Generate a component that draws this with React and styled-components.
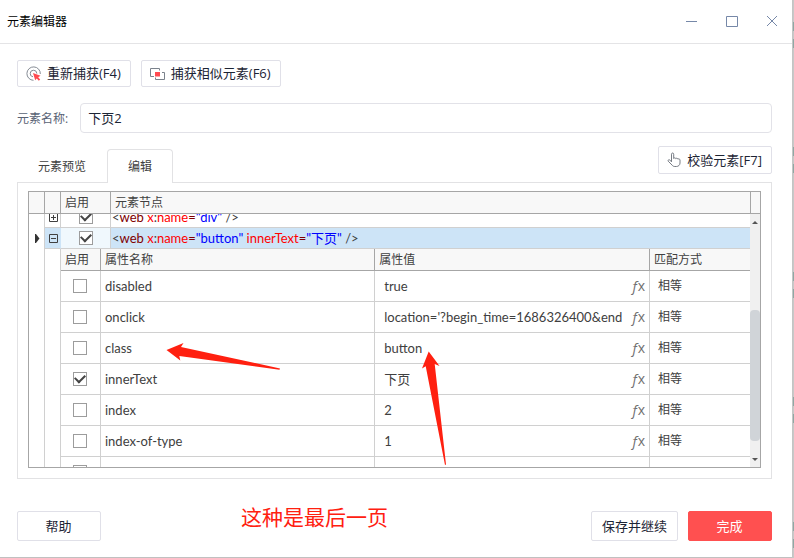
import { useLayoutEffect, useRef } from 'react'
import styled, { createGlobalStyle } from 'styled-components'

const GlobalStyle = createGlobalStyle`
  * {
    box-sizing: border-box;
  }
  body {
    margin: 0;
    background: #fff;
    font-family: "Open Sans", "Noto Sans CJK SC", sans-serif;
    font-size: 12px;
    color: #404040;
  }
  button, input {
    font: inherit;
    color: inherit;
  }
`

const Desktop = styled.div`
  display: flex;
  height: 100vh;
  min-height: 480px;
  background: #c8c8c8;
  position: relative;
`

const DesktopEdge = styled.div`
  width: 2px;
  border-left: 1px solid #c4c4c4;
  background: repeating-linear-gradient(
    #c8c8c8 0 22px,
    #8fa8a4 22px 31px,
    #c8c8c8 31px 39px,
    #8fa8a4 39px 48px,
    #c8c8c8 48px 125px
  );
`

const Window = styled.main`
  flex: 1;
  min-width: 0;
  display: flex;
  flex-direction: column;
  background: #fff;
  border-bottom: 1px solid #c0c0c0;
`

const TitleBar = styled.header`
  height: 44px;
  flex: none;
  display: flex;
  align-items: center;
  justify-content: space-between;
  padding-left: 7px;
  border-bottom: 1px solid #e4e4e6;
`

const Title = styled.h1`
  margin: 0;
  padding-bottom: 2px;
  font-size: 12px;
  font-weight: 400;
  color: #000;
`

const WindowControls = styled.div`
  display: flex;
`

const WindowButton = styled.button`
  width: 40px;
  height: 43px;
  padding: 0 0 2px;
  border: 0;
  background: none;
  color: #7688a8;

  svg {
    display: block;
    margin: 0 auto;
  }
`

const Content = styled.div`
  flex: 1;
  min-height: 0;
  display: flex;
  flex-direction: column;
  padding: 16px 20px 16px 17px;
`

const Toolbar = styled.div`
  display: flex;
  gap: 10px;
  margin-bottom: 16px;
`

const Button = styled.button`
  display: flex;
  align-items: center;
  justify-content: center;
  gap: 5px;
  height: ${({ $height }) => $height || 27}px;
  min-width: ${({ $wide }) => ($wide ? '84px' : '0')};
  padding: 0 ${({ $padding }) => $padding || 9}px 2px ${({ $padding }) => $padding || 8}px;
  border: 1px solid ${({ $primary }) => ($primary ? '#ff5050' : '#e0e0e8')};
  border-radius: 2px;
  background: ${({ $primary }) => ($primary ? '#ff5050' : '#fff')};
  color: ${({ $primary }) => ($primary ? '#fff' : '#1c2434')};
  font-size: 13px;
  white-space: nowrap;

  svg {
    margin-top: 2px;
  }
`

const Field = styled.div`
  display: flex;
  align-items: center;
  gap: 12px;
  margin-bottom: 13px;
  color: #586274;
`

const TextInput = styled.input`
  flex: 1;
  min-width: 0;
  height: 30px;
  padding: 0 7px 2px;
  border: 1px solid #e2e2e8;
  border-radius: 4px;
  outline: none;
  font-size: 13px;
  color: #1c2434;
`

const TabRow = styled.div`
  display: flex;
  justify-content: space-between;
  align-items: flex-start;
  height: 36px;
`

const Tabs = styled.div`
  display: flex;
  padding-top: 3px;
`

const Tab = styled.button`
  height: 34px;
  padding: 0 20px 2px;
  border: 1px solid ${({ $active }) => ($active ? '#e2e2e4' : 'transparent')};
  border-bottom: 0;
  border-radius: 4px 4px 0 0;
  background: ${({ $active }) => ($active ? '#fff' : 'transparent')};
  position: relative;
  z-index: ${({ $active }) => ($active ? 1 : 0)};
`

const Panel = styled.section`
  flex: 1;
  min-height: 0;
  display: flex;
  padding: 8px 10px 10px;
  border: 1px solid #e2e2e4;
`

const TreeGrid = styled.div`
  flex: 1;
  min-width: 0;
  display: flex;
  border: 1px solid #a6a6a6;
`

const Viewport = styled.div`
  flex: 1;
  min-width: 0;
  overflow: hidden;
`

const Table = styled.table`
  width: 100%;
  table-layout: fixed;
  border-collapse: separate;
  border-spacing: 0;
`

const HeadCell = styled.th`
  height: 22px;
  padding: 0 4px;
  border-right: 1px solid #a6a6a6;
  border-bottom: 1px solid #a6a6a6;
  background: #f8f8f8;
  font-weight: 400;
  line-height: 20px;
  text-align: left;

  &:last-child {
    border-right: 0;
  }
`

const StickyHead = styled.thead`
  position: sticky;
  top: 0;
  z-index: 1;
`

const NodeCell = styled.td`
  height: 21px;
  padding: 0 1px;
  border-right: 1px solid #d0d0d0;
  border-bottom: 1px solid #d0d0d0;
  background: ${({ $fill }) => $fill || '#fff'};
  font-family: Lato, "Noto Sans CJK SC", sans-serif;
  font-size: 13px;
  line-height: 20px;
  white-space: nowrap;

  &:last-child {
    border-right: 0;
  }
`

const GutterCell = styled(NodeCell)`
  border-bottom: 0;
`

const ExpandCell = styled(NodeCell)`
  padding: 0 0 0 4px;
  border-right-color: ${({ $fill }) => $fill || '#d0d0d0'};
`

const DetailCell = styled.td`
  padding: 0;
`

const AttrCell = styled.td`
  height: 31px;
  padding: 0 4px;
  border-right: 1px solid #d0d0d0;
  border-bottom: 1px solid #d0d0d0;
  font-family: Lato, "Noto Sans CJK SC", sans-serif;
  font-size: ${({ $small }) => ($small ? 12 : 13)}px;
  line-height: 18px;
  white-space: nowrap;

  &:last-child {
    border-right: 0;
    padding-left: 8px;
  }
`

const CheckCell = styled(AttrCell)`
  padding: 0 5px 0 4px;
`

const ValueBox = styled.div`
  display: flex;
  align-items: center;
  justify-content: space-between;
  padding-left: 5px;
`

const ValueText = styled.span`
  overflow: hidden;
`

const FxButton = styled.button`
  padding: 0;
  border: 0;
  background: none;
  color: #707070;
  font-family: "Open Sans", sans-serif;
  font-size: 14px;
  line-height: 18px;

  i {
    margin-right: -1px;
  }
`

const CheckBox = styled.input`
  appearance: none;
  display: grid;
  place-content: center;
  width: 14px;
  height: 14px;
  margin: 0 auto;
  border: 1px solid #9c9c9c;
  background: #fff;

  &:checked::after {
    content: "";
    width: 8px;
    height: 5px;
    margin-bottom: 3px;
    border: solid #444;
    border-width: 0 0 2px 2px;
    transform: rotate(-45deg);
  }
`

const ToggleButton = styled.button`
  display: block;
  width: 9px;
  height: 9px;
  padding: 0;
  border: 0;
  background: none;

  svg {
    display: block;
  }
`

const RowMarker = styled.svg`
  display: block;
`

const Syntax = styled.span`
  color: ${({ $color }) => $color};
`

const ScrollColumn = styled.div`
  width: 10px;
  display: flex;
  flex-direction: column;
  background: #f0f0f0;
`

const ScrollCap = styled.div`
  height: 22px;
  border-left: 1px solid #a6a6a6;
  border-bottom: 1px solid #a6a6a6;
  background: #f8f8f8;
`

const ScrollArrow = styled.div`
  height: 16px;
  display: grid;
  place-items: center;
`

const ScrollTrack = styled.div`
  flex: 1;
  display: flex;
  flex-direction: column;
  justify-content: flex-end;
  padding-bottom: 10px;
`

const ScrollThumb = styled.div`
  height: 62%;
  border-radius: 4px;
  background: #d0d4d8;
`

const Footer = styled.footer`
  display: flex;
  gap: 10px;
  margin-top: 32px;

  button:first-child {
    margin-right: auto;
  }
`

const Markup = styled.svg`
  position: absolute;
  left: 0;
  top: 0;
  pointer-events: none;
`

const Note = styled.p`
  position: absolute;
  left: 241px;
  top: 502px;
  margin: 0;
  color: #ff2010;
  font-size: 21px;
  line-height: 30px;
`

const attributes = [
  { name: 'disabled', value: 'true', match: '相等' },
  { name: 'onclick', value: "location='?begin_time=1686326400&end", match: '相等' },
  { name: 'class', value: 'button', match: '相等' },
  { name: 'innerText', value: '下页', match: '相等', enabled: true },
  { name: 'index', value: '2', match: '相等' },
  { name: 'index-of-type', value: '1', match: '相等' },
  { name: '', value: '', match: '' },
]

const nodes = [
  { attrs: [['x:name', 'div']] },
  { attrs: [['x:name', 'button'], ['innerText', '下页']], expanded: true },
]

function NodeMarkup({ attrs }) {
  return (
    <>
      &lt;<Syntax $color="#800000">web</Syntax>
      {attrs.map(([key, value]) => {
        const parts = key.split(':')
        return (
          <span key={key}>
            {' '}
            <Syntax $color="#f00">{parts[0]}</Syntax>
            {parts[1] && <>:<Syntax $color="#f00">{parts[1]}</Syntax></>}
            <Syntax $color="#800000">=</Syntax>
            <Syntax $color="#00f">"{value}"</Syntax>
          </span>
        )
      })}
      {' '}/&gt;
    </>
  )
}

function TreeNode({ node }) {
  const open = node.expanded
  const blue = open ? '#cde4f7' : undefined
  return (
    <tr>
      <GutterCell>
        {open && (
          <RowMarker width="14" height="11" viewBox="0 0 14 11">
            <path d="M5 1h1l3.500 4.500-3.500 4.500h-1z" fill="#333" />
          </RowMarker>
        )}
      </GutterCell>
      <ExpandCell $fill={blue}>
        <ToggleButton aria-label={open ? '折叠' : '展开'}>
          <svg width="9" height="9" viewBox="0 0 9 9" fill="none" stroke="#404040">
            <path d={open ? 'M.5 .5h8v8h-8zM2 4.500h5' : 'M.5 .5h8v8h-8zM2 4.500h5M4.500 2v5'} />
          </svg>
        </ToggleButton>
      </ExpandCell>
      <NodeCell $fill={open ? '#f0f8fd' : undefined}>
        <CheckBox type="checkbox" aria-label="启用" defaultChecked />
      </NodeCell>
      <NodeCell $fill={blue}>
        <NodeMarkup attrs={node.attrs} />
      </NodeCell>
    </tr>
  )
}

function AttributeTable() {
  return (
    <Table>
      <colgroup>
        <col style={{ width: 40 }} />
        <col style={{ width: '39.8%' }} />
        <col />
        <col style={{ width: 100 }} />
      </colgroup>
      <thead>
        <tr>
          <HeadCell>启用</HeadCell>
          <HeadCell>属性名称</HeadCell>
          <HeadCell>属性值</HeadCell>
          <HeadCell>匹配方式</HeadCell>
        </tr>
      </thead>
      <tbody>
        {attributes.map((attr) => (
          <tr key={attr.name}>
            <CheckCell>
              <CheckBox type="checkbox" aria-label={attr.name} defaultChecked={attr.enabled} />
            </CheckCell>
            <AttrCell>{attr.name}</AttrCell>
            <AttrCell>
              {attr.value && (
                <ValueBox>
                  <ValueText>{attr.value}</ValueText>
                  <FxButton><i>ƒ</i>x</FxButton>
                </ValueBox>
              )}
            </AttrCell>
            <AttrCell $small>{attr.match}</AttrCell>
          </tr>
        ))}
      </tbody>
    </Table>
  )
}

function ElementTree() {
  const viewport = useRef(null)

  useLayoutEffect(() => {
    viewport.current.scrollTop = 7
  }, [])

  return (
    <TreeGrid>
      <Viewport ref={viewport}>
        <Table>
          <colgroup>
            <col style={{ width: 16 }} />
            <col style={{ width: 16 }} />
            <col style={{ width: 50 }} />
            <col />
          </colgroup>
          <StickyHead>
            <tr>
              <HeadCell />
              <HeadCell />
              <HeadCell>启用</HeadCell>
              <HeadCell>元素节点</HeadCell>
            </tr>
          </StickyHead>
          <tbody>
            {nodes.map((node, i) => <TreeNode key={i} node={node} />)}
            <tr>
              <GutterCell />
              <GutterCell />
              <DetailCell colSpan={2}>
                <AttributeTable />
              </DetailCell>
            </tr>
          </tbody>
        </Table>
      </Viewport>
      <ScrollColumn>
        <ScrollCap />
        <ScrollArrow>
          <svg width="6" height="3" viewBox="0 0 6 3"><path d="M0 3l3-3 3 3z" fill="#555" /></svg>
        </ScrollArrow>
        <ScrollTrack>
          <ScrollThumb />
        </ScrollTrack>
        <ScrollArrow>
          <svg width="6" height="3" viewBox="0 0 6 3"><path d="M0 0l3 3 3-3z" fill="#555" /></svg>
        </ScrollArrow>
      </ScrollColumn>
    </TreeGrid>
  )
}

function CaptureIcon() {
  return (
    <svg width="16" height="16" viewBox="0 0 16 16" fill="none">
      <path d="M14.300 8A6.700 6.700 0 1 0 7.500 14.300" stroke="#858b94" />
      <path d="M10.800 7.500A3.300 3.300 0 1 0 7 10.800" stroke="#858b94" />
      <path d="M7 7l7.500 2.800-2.300 1.400 2 2.300-1.400 1.200-2-2.200-1.600 1.800z" fill="#ff4a50" />
    </svg>
  )
}

function SimilarIcon() {
  return (
    <svg width="16" height="14" viewBox="0 0 16 14" fill="none">
      <path d="M4 9.500H.5v-8h9v2M5.500 10.500v2h9v-7H12" stroke="#7b828c" />
      <path d="M5 5h5v4.500h-5z" fill="#ff4a50" />
    </svg>
  )
}

function PointerIcon() {
  return (
    <svg width="15" height="16" viewBox="1 0 15 16" fill="none" stroke="#777c84" strokeLinejoin="round" strokeLinecap="round">
      <path d="M5.500 9.500V2.200c0-1.600 2.200-1.600 2.200 0V6.500c.2-1 2-.9 2.100.2.400-.8 2-.6 2.100.5.500-.7 2-.4 2.100.8v3c0 2-1.600 3.500-3.600 3.500H8.800c-1.300 0-2-.5-2.800-1.500L2.200 9.200C1.600 8 3 7.200 3.900 8z" />
    </svg>
  )
}

export default function App() {
  return (
    <Desktop>
      <GlobalStyle />
      <Window>
        <TitleBar>
          <Title>元素编辑器</Title>
          <WindowControls>
            <WindowButton aria-label="最小化">
              <svg width="12" height="12" fill="none" stroke="currentColor"><path d="M0 6.500h11" /></svg>
            </WindowButton>
            <WindowButton aria-label="最大化">
              <svg width="12" height="12" fill="none" stroke="currentColor"><path d="M.5 1.500h11v10H.5z" /></svg>
            </WindowButton>
            <WindowButton aria-label="关闭">
              <svg width="12" height="12" fill="none" stroke="currentColor"><path d="M1 1l10 10M11 1L1 11" /></svg>
            </WindowButton>
          </WindowControls>
        </TitleBar>
        <Content>
          <Toolbar>
            <Button><CaptureIcon />重新捕获(F4)</Button>
            <Button><SimilarIcon />捕获相似元素(F6)</Button>
          </Toolbar>
          <Field>
            <label htmlFor="element-name">元素名称:</label>
            <TextInput id="element-name" defaultValue="下页2" />
          </Field>
          <TabRow>
            <Tabs role="tablist">
              <Tab role="tab" aria-selected="false">元素预览</Tab>
              <Tab role="tab" aria-selected="true" $active>编辑</Tab>
            </Tabs>
            <Button $height={28}><PointerIcon />校验元素[F7]</Button>
          </TabRow>
          <Panel>
            <ElementTree />
          </Panel>
          <Footer>
            <Button $wide $height={30}>帮助</Button>
            <Button $height={30} $padding={10}>保存并继续</Button>
            <Button $wide $height={30} $primary>完成</Button>
          </Footer>
        </Content>
      </Window>
      <DesktopEdge />
      <Markup width="460" height="480" fill="#ff2010">
        <path d="M166.500 350L183.500 343 181 347 280 368.500 279.500 369.800 179.300 356 180.300 360.500z" />
        <path d="M428.700 351.500L439.500 366 434.700 364 446 464.500 445 465 425.700 366.300 422 368.500z" />
      </Markup>
      <Note>这种是最后一页</Note>
    </Desktop>
  )
}
